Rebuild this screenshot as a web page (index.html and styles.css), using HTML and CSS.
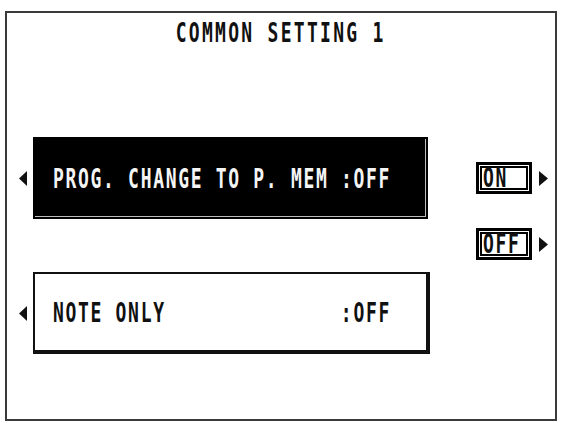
FILE: index.html
```html
<!DOCTYPE html>
<html lang="en">
<head>
<meta charset="utf-8">
<title>COMMON SETTING 1</title>
<link rel="stylesheet" href="styles.css">
</head>
<body>
<div class="screen">
  <div class="title"><span class="lcd title-text">COMMON SETTING 1</span></div>
  <div class="main">
    <div class="rows">
      <div class="row">
        <svg class="arrow-l" width="8" height="15" viewBox="0 0 8 15"><polygon points="8,0 0,7.5 8,15" fill="#111"/></svg>
        <div class="box box-sel">
          <div class="line"><span class="lcd row-text">PROG. CHANGE TO P. MEM :OFF</span></div>
        </div>
      </div>
      <div class="row">
        <svg class="arrow-l" width="8" height="15" viewBox="0 0 8 15"><polygon points="8,0 0,7.5 8,15" fill="#111"/></svg>
        <div class="box box-plain">
          <div class="line"><span class="lcd row-text">NOTE ONLY</span><span class="lcd row-text">:OFF</span></div>
        </div>
      </div>
    </div>
    <div class="options">
      <div class="option">
        <div class="btn"><span class="lcd btn-text">ON</span></div>
        <svg class="arrow-r" width="9" height="15" viewBox="0 0 9 15"><polygon points="0,0 9,7.5 0,15" fill="#111"/></svg>
      </div>
      <div class="option">
        <div class="btn"><span class="lcd btn-text">OFF</span></div>
        <svg class="arrow-r" width="9" height="15" viewBox="0 0 9 15"><polygon points="0,0 9,7.5 0,15" fill="#111"/></svg>
      </div>
    </div>
  </div>
</div>
</body>
</html>
```
FILE: styles.css
```css
html, body {
  margin: 0;
  padding: 0;
  background: #fff;
}

.screen {
  margin: 11px 0 0 5px;
  width: 548px;
  height: 406px;
  border: 2px solid #3a3a3a;
  display: flex;
  flex-direction: column;
}

.lcd {
  display: inline-block;
  font-family: "DejaVu Sans Mono", "Liberation Mono", monospace;
  font-weight: bold;
  font-size: 20px;
  line-height: 20px;
  height: 20px;
  white-space: pre;
  color: #111;
}

.title {
  padding-top: 9px;
  height: 20px;
  display: flex;
  justify-content: center;
}

.title-text {
  letter-spacing: 2.54px;
  transform: scale(0.9, 1.37);
  transform-origin: center center;
}

.main {
  display: flex;
  margin-top: 95px;
  padding-left: 12px;
}

.rows {
  display: flex;
  flex-direction: column;
  gap: 53px;
}

.row {
  display: flex;
  align-items: center;
  gap: 6px;
}

.arrow-l, .arrow-r {
  display: block;
  flex: none;
}

.box {
  box-sizing: border-box;
  height: 82px;
  display: flex;
  align-items: center;
  padding-left: 18px;
}

.box-sel {
  width: 395px;
  background: #000;
  border: 2px solid #000;
  box-shadow: inset -1px -1px 0 #bdbdbd;
}

.box-sel .row-text {
  color: #f4f4f4;
}

.box-plain {
  width: 397px;
  background: #fff;
  border: 2px solid #111;
  border-right-width: 4px;
  border-bottom-width: 4px;
}

.line {
  flex: none;
  width: 375.5px;
  height: 20px;
  display: flex;
  justify-content: space-between;
  transform: scale(0.9, 1.37);
  transform-origin: left center;
}

.row-text {
  letter-spacing: 1.87px;
}

.options {
  display: flex;
  flex-direction: column;
  gap: 34px;
  margin-left: 46px;
  margin-top: 25px;
}

.option {
  display: flex;
  align-items: center;
  gap: 7px;
}

.btn {
  box-sizing: border-box;
  width: 56px;
  height: 32px;
  border: 3px solid #000;
  box-shadow: inset 0 0 0 1px #fff, inset 0 0 0 3px #000;
  background: #fff;
  padding-left: 4px;
  display: flex;
  align-items: center;
}

.btn-text {
  letter-spacing: 1.87px;
  transform: scale(0.9, 1.3);
  transform-origin: left center;
}
```
